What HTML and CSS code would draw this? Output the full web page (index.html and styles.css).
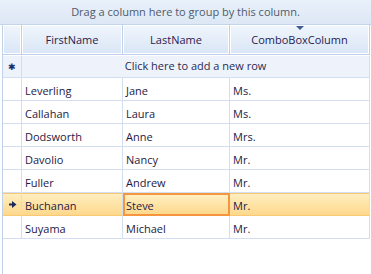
FILE: index.html
```html
<!DOCTYPE html>
<html lang="en">
<head>
    <meta charset="UTF-8">
    <title>Grid</title>
<link rel="stylesheet" href="styles.css">
</head>
<body>
    <div class="grid">
        <!-- Group panel -->
        <div class="group-panel">Drag a column here to group by this column.</div>

        <div class="grid-body">
            <!-- Header -->
            <div class="row header-row">
                <div class="cell indicator header-cell"></div>
                <div class="cell header-cell col-first">FirstName</div>
                <div class="cell header-cell col-last">LastName</div>
                <div class="cell header-cell col-combo">
                    <span class="sort-arrow"></span>
                    ComboBoxColumn
                </div>
            </div>

            <!-- New row -->
            <div class="row new-row">
                <div class="cell indicator new-indicator">&#x2731;</div>
                <div class="cell new-row-text">Click here to add a new row</div>
            </div>

            <div class="row data-row">
                <div class="cell indicator"></div>
                <div class="cell col-first">Leverling</div>
                <div class="cell col-last">Jane</div>
                <div class="cell col-combo">Ms.</div>
            </div>
            <div class="row data-row">
                <div class="cell indicator"></div>
                <div class="cell col-first">Callahan</div>
                <div class="cell col-last">Laura</div>
                <div class="cell col-combo">Ms.</div>
            </div>
            <div class="row data-row">
                <div class="cell indicator"></div>
                <div class="cell col-first">Dodsworth</div>
                <div class="cell col-last">Anne</div>
                <div class="cell col-combo">Mrs.</div>
            </div>
            <div class="row data-row">
                <div class="cell indicator"></div>
                <div class="cell col-first">Davolio</div>
                <div class="cell col-last">Nancy</div>
                <div class="cell col-combo">Mr.</div>
            </div>
            <div class="row data-row">
                <div class="cell indicator"></div>
                <div class="cell col-first">Fuller</div>
                <div class="cell col-last">Andrew</div>
                <div class="cell col-combo">Mr.</div>
            </div>
            <div class="row data-row selected">
                <div class="cell indicator">
                    <svg width="9" height="9" viewBox="0 0 9 9"><path d="M1 3.5h3V1l4.5 3.5L4 8V5.5H1z" fill="#1c2a5c"/></svg>
                </div>
                <div class="cell col-first">Buchanan</div>
                <div class="cell col-last current">Steve</div>
                <div class="cell col-combo">Mr.</div>
            </div>
            <div class="row data-row">
                <div class="cell indicator"></div>
                <div class="cell col-first">Suyama</div>
                <div class="cell col-last">Michael</div>
                <div class="cell col-combo">Mr.</div>
            </div>
        </div>
    </div>
</body>
</html>
```

FILE: styles.css
```css
body {
    margin: 0;
    font-family: "Open Sans", "Noto Sans", sans-serif;
    font-size: 11px;
    color: #1e1a44;
    background-color: #FFFFFF;
}

.grid {
    width: 371px;
    height: 274px;
    overflow: hidden;
}

/* Group panel */
.group-panel {
    height: 24px;
    line-height: 24px;
    text-align: center;
    color: #4f5b6b;
    background: linear-gradient(#e9f0fa, #dde7f5);
    border-bottom: 1px solid #c4d4ea;
}

.grid-body {
    margin-left: 2px;
    border-left: 1px solid #c0d2ea;
    height: 249px;
}

.row {
    display: flex;
}

.cell {
    box-sizing: border-box;
    border-right: 1px solid #d3dff0;
    border-bottom: 1px solid #d3dff0;
    padding-left: 3px;
    white-space: nowrap;
    overflow: hidden;
}

.indicator {
    width: 19px;
    padding: 0;
    display: flex;
    align-items: center;
    justify-content: center;
}
.col-first { width: 101px; }
.col-last { width: 107px; }
.col-combo { width: 140px; }

/* Header */
.header-row {
    height: 30px;
}
.header-cell {
    position: relative;
    height: 30px;
    line-height: 29px;
    padding-left: 0;
    text-align: center;
    color: #2a2150;
    background: linear-gradient(#f0f5fc, #d9e6f6);
    border-right: 1px solid #bfd1ea;
    border-bottom: 1px solid #bfd1ea;
    box-shadow: inset 1px 1px 0 #ffffff, inset -1px -1px 0 #ffffff;
}
.sort-arrow {
    position: absolute;
    top: 1px;
    left: 66px;
    width: 0;
    height: 0;
    border-left: 4px solid transparent;
    border-right: 4px solid transparent;
    border-top: 4px solid #3f5c93;
}

/* New row */
.new-row {
    height: 23px;
}
.new-row .cell {
    height: 23px;
    background-color: #eef3fb;
    border-top: 1px solid #ffffff;
}
.new-indicator {
    font-size: 9px;
    color: #1c2a6c;
}
.new-row-text {
    width: 348px;
    line-height: 20px;
    text-align: center;
    padding-left: 0;
    color: #2a2a50;
}

/* Data rows */
.data-row .cell {
    height: 23px;
    padding-top: 2px;
    line-height: 22px;
}
.data-row .indicator {
    padding-top: 0;
}

.selected .cell {
    background: linear-gradient(#ffefc2, #fdd88c);
    border-bottom: 1px solid #f9c872;
    box-shadow: inset 0 1px 0 #f9c872;
}
.selected .current {
    border: 2px solid #f5963e;
    box-shadow: none;
    padding-top: 2px;
    line-height: 18px;
    padding-left: 1px;
}
```
